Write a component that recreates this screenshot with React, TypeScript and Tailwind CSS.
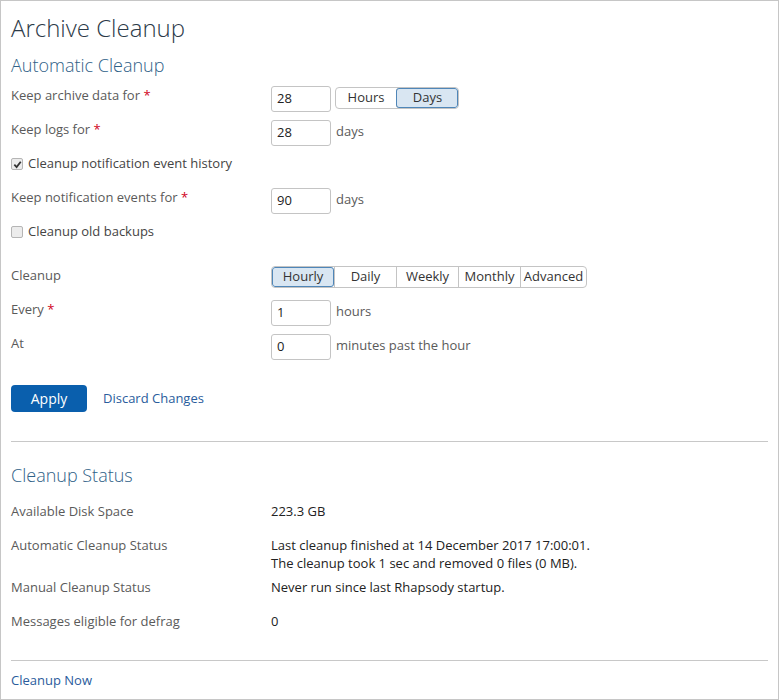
import clsx from 'clsx'

const font = { fontFamily: '"Open Sans", "Liberation Sans", sans-serif' }

const Req = () => <span className="text-[#d0021b]"> *</span>

const Input: React.FC<{ value: string }> = ({ value }) => (
  <div className="w-[60px] h-[26px] shrink-0 border border-[#c4c4c4] rounded-[3px] px-[5px] flex items-center text-[13px] text-[#222] bg-white">
    {value}
  </div>
)

const Segments: React.FC<{ items: { label: string; width: string }[]; active: number }> = ({ items, active }) => (
  <div className="flex h-[22px] border border-[#c4c4c4] rounded-[4px] overflow-hidden">
    {items.map((it, i) => (
      <div
        key={it.label}
        className={clsx(
          'flex items-center justify-center text-[13px] text-[#333] box-border',
          it.width,
          i > 0 && 'border-l border-[#c4c4c4]',
          i === active && 'bg-[#d9e6f2] outline outline-1 outline-[#4f86b8] -outline-offset-1 rounded-[3px]',
        )}
      >
        {it.label}
      </div>
    ))}
  </div>
)

const Checkbox: React.FC<{ checked?: boolean; label: string }> = ({ checked, label }) => (
  <div className="flex items-center h-[20px]">
    <span className="w-[12px] h-[12px] border border-[#b5b5b5] rounded-[2px] bg-[#ececec] flex items-center justify-center">
      {checked && (
        <svg width="9" height="9" viewBox="0 0 10 10">
          <path d="M1.5 5.2 L4 7.8 L8.6 2" fill="none" stroke="#333" strokeWidth="2" />
        </svg>
      )}
    </span>
    <span className="ml-[5px] text-[13px] text-[#444]">{label}</span>
  </div>
)

const Row: React.FC<{ label: React.ReactNode; className?: string; children?: React.ReactNode }> = ({ label, className, children }) => (
  <div className={clsx('flex items-start', className)}>
    <div className="w-[260px] shrink-0 text-[13px] leading-[18px] text-[#5a5a5a]">{label}</div>
    <div className="flex items-start">{children}</div>
  </div>
)

const Unit: React.FC<{ children: React.ReactNode }> = ({ children }) => (
  <span className="ml-[5px] pt-[2px] text-[13px] leading-[18px] text-[#5a5a5a]">{children}</span>
)

const StatusRow: React.FC<{ label: string; className?: string; children: React.ReactNode }> = ({ label, className, children }) => (
  <div className={clsx('flex items-start text-[13px] leading-[18px]', className)}>
    <div className="w-[260px] shrink-0 text-[#5a5a5a]">{label}</div>
    <div className="text-[#222]">{children}</div>
  </div>
)

export default function App() {
  return (
    <div style={font} className="w-[779px] h-[700px] box-border border border-[#c6c6c6] bg-white pl-[10px] pr-[10px] pt-[13px] overflow-hidden">
      <h1 className="text-[24px] leading-[28px] font-light text-[#2c3a48]">Archive Cleanup</h1>
      <h2 className="mt-[11px] text-[18px] leading-[24px] font-light text-[#2f6187]">Automatic Cleanup</h2>

      <Row className="mt-[9px]" label={<>Keep archive data for<Req /></>}>
        <Input value="28" />
        <div className="ml-[4px] mt-[1px]">
          <Segments
            active={1}
            items={[
              { label: 'Hours', width: 'w-[60px]' },
              { label: 'Days', width: 'w-[62px]' },
            ]}
          />
        </div>
      </Row>

      <Row className="mt-[8px]" label={<>Keep logs for<Req /></>}>
        <Input value="28" />
        <Unit>days</Unit>
      </Row>

      <div className="mt-[8px]">
        <Checkbox checked label="Cleanup notification event history" />
      </div>

      <Row className="mt-[14px]" label={<>Keep notification events for<Req /></>}>
        <Input value="90" />
        <Unit>days</Unit>
      </Row>

      <div className="mt-[8px]">
        <Checkbox label="Cleanup old backups" />
      </div>

      <Row className="mt-[24px]" label="Cleanup">
        <Segments
          active={0}
          items={[
            { label: 'Hourly', width: 'w-[62px]' },
            { label: 'Daily', width: 'w-[62px]' },
            { label: 'Weekly', width: 'w-[62px]' },
            { label: 'Monthly', width: 'w-[62px]' },
            { label: 'Advanced', width: 'w-[66px]' },
          ]}
        />
      </Row>

      <Row className="mt-[12px]" label={<>Every<Req /></>}>
        <Input value="1" />
        <Unit>hours</Unit>
      </Row>

      <Row className="mt-[8px]" label="At">
        <Input value="0" />
        <Unit>minutes past the hour</Unit>
      </Row>

      <div className="mt-[25px] flex items-center">
        <button className="w-[76px] h-[27px] rounded-[4px] bg-[#0a5fad] text-white text-[14px]">Apply</button>
        <a className="ml-[16px] text-[13px] text-[#2a5c9c]">Discard Changes</a>
      </div>

      <div className="mt-[29px] border-t border-[#c8c8c8]" />

      <h2 className="mt-[21px] text-[18px] leading-[24px] font-light text-[#2f6187]">Cleanup Status</h2>

      <StatusRow className="mt-[15px]" label="Available Disk Space">223.3 GB</StatusRow>
      <StatusRow className="mt-[16px]" label="Automatic Cleanup Status">
        <div>Last cleanup finished at 14 December 2017 17:00:01.</div>
        <div>The cleanup took 1 sec and removed 0 files (0 MB).</div>
      </StatusRow>
      <StatusRow className="mt-[6px]" label="Manual Cleanup Status">Never run since last Rhapsody startup.</StatusRow>
      <StatusRow className="mt-[16px]" label="Messages eligible for defrag">0</StatusRow>

      <div className="mt-[30px] border-t border-[#c8c8c8]" />
      <a className="block mt-[10px] text-[13px] leading-[18px] text-[#2a5c9c]">Cleanup Now</a>
    </div>
  )
}
